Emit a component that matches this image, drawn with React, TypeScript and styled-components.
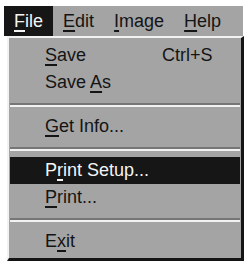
import React from "react";
import styled, { createGlobalStyle } from "styled-components";

const Global = createGlobalStyle`
  html, body { margin: 0; padding: 0; background: #ffffff; }
  body { padding: 6px 4px 0 4px; font-family: "Liberation Sans", Arial, sans-serif; }
  #root { width: 239px; }
`;

const MenuBar = styled.div`
  display: flex;
  height: 30px;
  width: 239px;
  background: #a4a4a4;
  align-items: stretch;
`;

const BarItem = styled.div<{ $active?: boolean }>`
  display: flex;
  align-items: center;
  padding: 0 10px;
  font-size: 18px;
  color: ${(p) => (p.$active ? "#f4f4f4" : "#141414")};
  background: ${(p) => (p.$active ? "#161616" : "transparent")};
`;

const Dropdown = styled.div`
  margin-left: 3px;
  width: 237px;
  box-sizing: border-box;
  background: #a4a4a4;
  border-top: 2px solid #f2f2f2;
  border-left: 2px solid #f2f2f2;
  border-right: 3px solid #141414;
  border-bottom: 3px solid #141414;
  padding: 4px 1px 3px 1px;
  display: flex;
  flex-direction: column;
`;

const Item = styled.div<{ $active?: boolean }>`
  display: grid;
  grid-template-columns: 117px 1fr;
  height: 27px;
  line-height: 27px;
  padding-left: 35px;
  font-size: 18px;
  color: ${(p) => (p.$active ? "#f4f4f4" : "#141414")};
  background: ${(p) => (p.$active ? "#161616" : "transparent")};
`;

const Separator = styled.div`
  padding: 7px 0 6px 0;
  &::before {
    content: "";
    display: block;
    height: 2px;
    background: #767676;
  }
  &::after {
    content: "";
    display: block;
    height: 2px;
    background: #f2f2f2;
  }
`;

const Key = styled.span`
  text-decoration: underline;
  text-decoration-thickness: 2px;
  text-underline-offset: 3px;
`;

const Shortcut = styled.span``;

export default function App() {
  return (
    <>
      <Global />
      <MenuBar>
        <BarItem $active>
          <span>
            <Key>F</Key>ile
          </span>
        </BarItem>
        <BarItem>
          <span>
            <Key>E</Key>dit
          </span>
        </BarItem>
        <BarItem>
          <span>
            <Key>I</Key>mage
          </span>
        </BarItem>
        <BarItem>
          <span>
            <Key>H</Key>elp
          </span>
        </BarItem>
      </MenuBar>
      <Dropdown>
        <Item>
          <span>
            <Key>S</Key>ave
          </span>
          <Shortcut>Ctrl+S</Shortcut>
        </Item>
        <Item>
          <span>
            Save <Key>A</Key>s
          </span>
        </Item>
        <Separator />
        <Item>
          <span>
            <Key>G</Key>et Info...
          </span>
        </Item>
        <Separator />
        <Item $active>
          <span>
            P<Key>r</Key>int Setup...
          </span>
        </Item>
        <Item>
          <span>
            <Key>P</Key>rint...
          </span>
        </Item>
        <Separator />
        <Item>
          <span>
            E<Key>x</Key>it
          </span>
        </Item>
      </Dropdown>
    </>
  );
}
